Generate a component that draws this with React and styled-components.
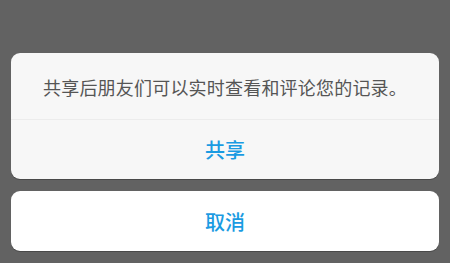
import React from "react";
import styled, { createGlobalStyle } from "styled-components";

const Global = createGlobalStyle`
  html, body { margin: 0; padding: 0; background: #626262; }
  body { font-family: "Noto Sans CJK SC", "Noto Sans", sans-serif; }
`;

const Screen = styled.div`
  width: 450px;
  height: 263px;
  box-sizing: border-box;
  padding: 53px 11px 12px 11px;
  display: flex;
  flex-direction: column;
  gap: 12px;
`;

const Card = styled.div`
  background: ${(p) => p.$bg};
  border-radius: 9px;
  box-shadow: 0 1px 0 rgba(0, 0, 0, 0.25);
  overflow: hidden;
  display: flex;
  flex-direction: column;
`;

const Message = styled.div`
  height: 67px;
  display: flex;
  align-items: center;
  justify-content: center;
  font-size: 18px;
  letter-spacing: 0.2px;
  color: #555555;
  border-bottom: 1px solid #ececec;
  padding-top: 2px;
  box-sizing: border-box;
`;

const Action = styled.div`
  height: ${(p) => p.$h}px;
  display: flex;
  align-items: center;
  justify-content: center;
  font-size: 20px;
  font-weight: 500;
  color: #1a9be2;
`;

export default function App() {
  return (
    <>
      <Global />
      <Screen>
        <Card $bg="#f7f7f7">
          <Message>共享后朋友们可以实时查看和评论您的记录。</Message>
          <Action $h={59}>共享</Action>
        </Card>
        <Card $bg="#ffffff">
          <Action $h={60}>取消</Action>
        </Card>
      </Screen>
    </>
  );
}
